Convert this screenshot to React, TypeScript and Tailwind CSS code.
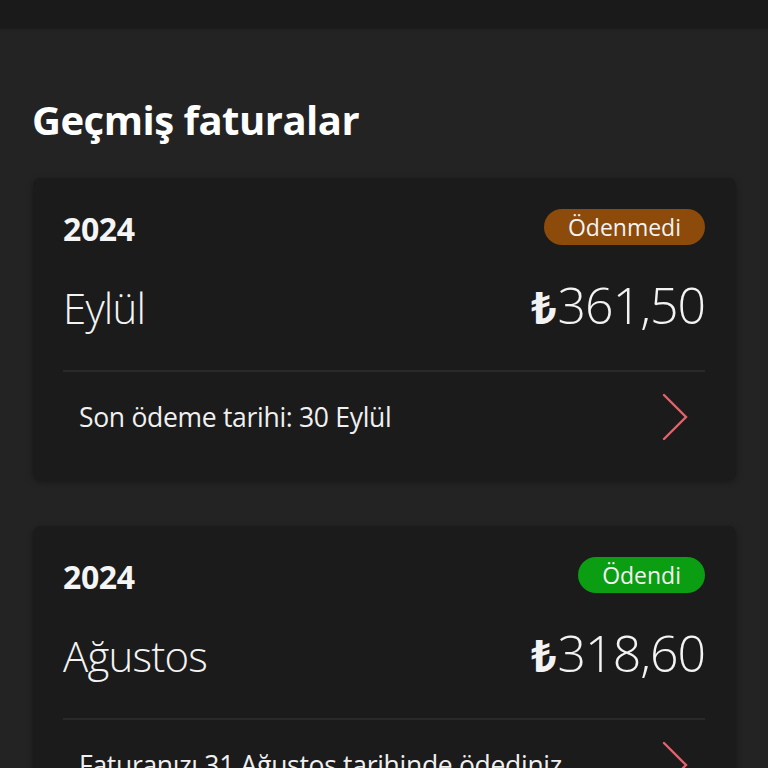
import React from "react";

type Bill = {
  year: string;
  status: string;
  statusClass: string;
  month: string;
  amount: string;
  note: string;
};

const bills: Bill[] = [
  {
    year: "2024",
    status: "Ödenmedi",
    statusClass: "bg-[#8c4a0b]",
    month: "Eylül",
    amount: "361,50",
    note: "Son ödeme tarihi: 30 Eylül",
  },
  {
    year: "2024",
    status: "Ödendi",
    statusClass: "bg-[#0b9d12]",
    month: "Ağustos",
    amount: "318,60",
    note: "Faturanızı 31 Ağustos tarihinde ödediniz.",
  },
];

function Chevron() {
  return (
    <svg width="28" height="48" viewBox="0 0 28 48" fill="none" className="shrink-0">
      <path d="M3 2 L25 24 L3 46" stroke="#e5626a" strokeWidth="2.4" strokeLinecap="round" strokeLinejoin="miter" />
    </svg>
  );
}

function BillCard({ bill }: { bill: Bill }) {
  return (
    <div className="rounded-[8px] bg-[#1b1b1b] pl-[30px] pr-[31px] pt-[31px] pb-[18px] shadow-[0_2px_6px_rgba(0,0,0,0.35)]">
      <div className="flex items-center justify-between h-[36px]">
        <span className="text-[32px] font-bold leading-none text-[#f5f5f5] mt-[4px] tracking-[-0.4px]">{bill.year}</span>
        <span className={`${bill.statusClass} rounded-full h-[36px] px-[24px] flex items-center text-[23px] leading-none text-[#f3f3f3]`}>
          {bill.status}
        </span>
      </div>
      <div className="flex items-baseline justify-between mt-[35px]">
        <span className="text-[42px] font-light leading-none text-[#f3f3f3] tracking-[-0.8px]">{bill.month}</span>
        <span className="text-[50px] font-light leading-none text-[#f3f3f3] tracking-[-1px]">
          <span className="font-bold text-[44px] mr-[2px]">₺</span>
          {bill.amount}
        </span>
      </div>
      <div className="mt-[40px] h-[2px] bg-[#292929]" />
      <div className="flex items-center justify-between h-[90px] pl-[16px] pr-[16px]">
        <span className="text-[26.5px] leading-none text-[#f0f0f0] tracking-[-0.3px]">{bill.note}</span>
        <Chevron />
      </div>
    </div>
  );
}

export default function App() {
  return (
    <div className="min-h-screen bg-[#232323]" style={{ fontFamily: '"Open Sans", "Noto Sans", "DejaVu Sans", sans-serif' }}>
      <div className="h-[28px] bg-[#1a1a1a] shadow-[0_1px_2px_rgba(0,0,0,0.25)]" />
      <div className="pl-[33px] pr-[32px]">
        <h1 className="mt-[72px] text-[40px] font-bold leading-none text-white tracking-[-0.5px] -ml-[1px]">Geçmiş faturalar</h1>
        <div className="mt-[38px] flex flex-col gap-[46px]">
          {bills.map((b, i) => (
            <BillCard key={i} bill={b} />
          ))}
        </div>
      </div>
    </div>
  );
}
